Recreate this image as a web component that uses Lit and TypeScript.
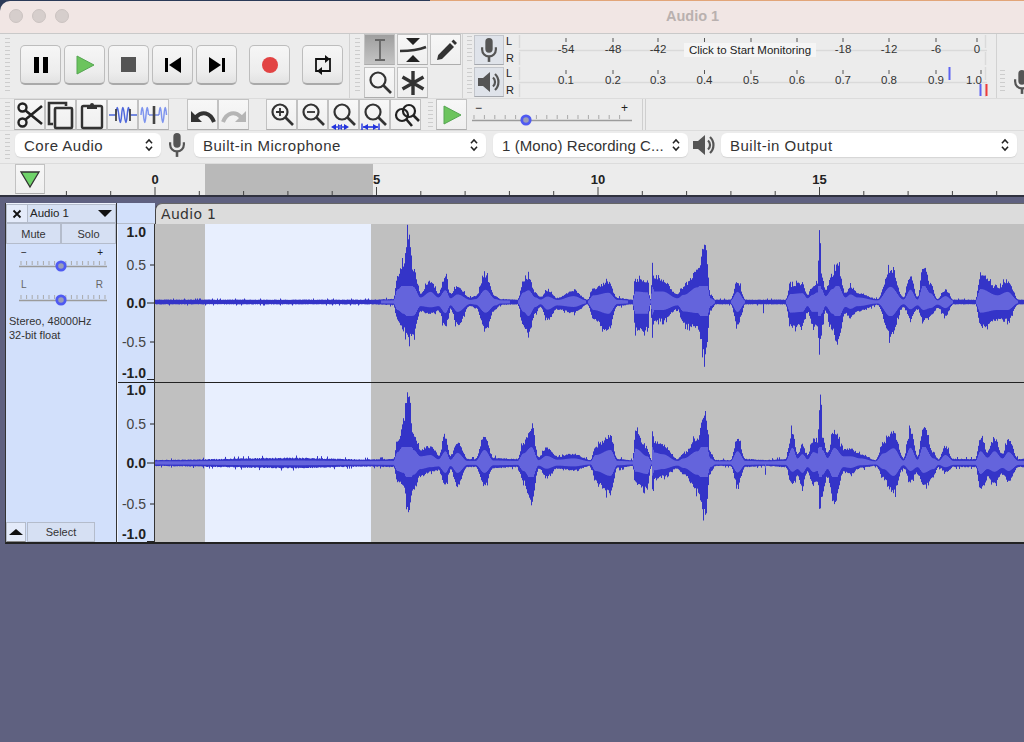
import { LitElement, css, html, svg } from "lit";
import { customElement } from "lit/decorators.js";

// [x, peak up, peak down] in screen px, read off the reference
const CH1: number[][] = [[155,2.3,2.3],[205,2.3,2.3],[370,2.3,2.3],[393,3,3],[397,29,20],[403,40,30],[408,72,40],[413,35,35],[420,10,10],[430,23,13],[438,10,10],[445,27,28],[450,8,8],[457,17,25],[470,4,4],[475,6,6],[485,28,27],[495,6,8],[500,3,3],[517,2.3,2.3],[523,22,25],[528,27,36],[535,10,12],[540,5,5],[547,12,19],[557,4,8],[573,13,12],[587,2.3,2.3],[593,15,20],[608,21,30],[617,4,4],[632,2.3,2.3],[635,24,30],[647,22,30],[650,3,3],[652,35,32],[654,24,20],[662,24,20],[677,8,8],[683,16,24],[697,34,28],[705,64,59],[710,8,10],[715,2.3,2.3],[730,2.3,2.3],[737,23,25],[745,2.3,2.3],[762,2.3,2.3],[763,2.3,13],[764,2.3,2.3],[785,2.3,2.3],[790,18,27],[802,20,25],[807,8,10],[812,16,25],[817,22,25],[819,75,55],[821,30,30],[825,13,10],[832,30,30],[837,40,44],[845,10,12],[850,17,17],[857,10,10],[877,3,3],[890,35,37],[903,5,5],[910,28,18],[917,5,8],[923,40,20],[930,20,15],[937,3,6],[945,13,15],[953,2.3,2.3],[975,2.3,2.3],[980,30,27],[997,15,20],[1007,23,20],[1018,2.3,2.3],[1024,2.3,2.3]];
const CH2: number[][] = [[155,3,3],[290,5,5],[370,3.5,3.5],[393,4,4],[397,25,20],[403,40,25],[408,79,50],[413,30,30],[420,15,15],[430,18,10],[438,8,8],[445,27,25],[450,7,7],[457,23,25],[467,4,4],[475,4,4],[484,30,25],[493,5,5],[517,4,4],[523,22,20],[531,37,43],[538,6,6],[546,16,14],[557,7,6],[573,10,8],[590,3,3],[595,18,20],[610,30,33],[617,4,5],[632,3,3],[635,33,22],[647,15,28],[651,3,3],[652,37,32],[654,24,18],[662,20,15],[677,4,6],[683,10,12],[697,27,30],[705,55,55],[710,10,10],[715,3,3],[730,3,3],[737,27,24],[745,4,4],[764,3,3],[765,3,13],[766,3,3],[785,4,4],[792,35,22],[797,10,15],[802,20,25],[807,8,10],[813,25,23],[817,22,20],[820,74,48],[822,30,30],[827,11,15],[834,35,44],[843,15,10],[850,15,12],[860,10,5],[875,3,3],[883,22,15],[893,34,33],[903,5,5],[910,35,20],[917,7,10],[923,40,25],[933,10,15],[938,4,4],[945,18,10],[953,4,4],[975,4,4],[980,27,28],[987,12,15],[994,27,22],[1002,10,12],[1008,25,20],[1018,4,4],[1024,4,4]];

const interp = (pts: number[][], x: number, i: number) => {
  for (let k = 1; k < pts.length; k++) {
    if (x <= pts[k][0]) {
      const a = pts[k - 1], b = pts[k];
      const t = (x - a[0]) / (b[0] - a[0]);
      const c = (1 - Math.cos(Math.PI * t)) / 2;
      return a[i] + (b[i] - a[i]) * c;
    }
  }
  return 2;
};

function wavePaths(pts: number[][], cy: number, seed: number) {
  let s = seed, peak = "", rms = "";
  const rnd = () => ((s = (s * 16807) % 2147483647) & 0xffff) / 0xffff;
  const jit = (a: number) => {
    const r = rnd();
    if (a > 6) return r > 0.88 ? 1.12 : 0.82 + 0.2 * r;
    return r > 0.93 ? 1.5 : 0.9 + 0.2 * r;
  };
  for (let x = 155; x < 1024; x++) {
    const u = interp(pts, x, 1), d = interp(pts, x, 2);
    const px = x - 155 + 0.5;
    peak += `M${px} ${(cy - u * jit(u)).toFixed(1)}V${(cy + d * jit(d)).toFixed(1)}`;
    if (u > 2.6) {
      const ru = Math.min(u * 0.42 + 0.4, 16);
      const rd = Math.min(d * 0.38 + 0.4, 14);
      rms += `M${px} ${(cy - ru).toFixed(1)}V${(cy + rd).toFixed(1)}`;
    }
  }
  return { peak, rms };
}

const mic = (c = "#555") => html`<svg viewBox="0 0 24 30" width="22" height="28" aria-hidden="true">
  <rect x="8" y="2" width="8" height="16" rx="4" fill=${c}></rect>
  <path d="M4.5 12v2.5a7.5 7.5 0 0 0 15 0V12" fill="none" stroke=${c} stroke-width="2.4"></path>
  <path d="M12 22v6" stroke=${c} stroke-width="2.8"></path>
</svg>`;
const speaker = (c = "#555") => html`<svg viewBox="0 0 24 24" width="24" height="24" aria-hidden="true">
  <path d="M1 8h5l7-6v20l-7-6H1z" fill=${c}></path>
  <path d="M16 7.5a6 6 0 0 1 0 9M18 4a11 11 0 0 1 0 16" fill="none" stroke=${c} stroke-width="2.2"></path>
</svg>`;
const chevrons = html`<svg class="chev" viewBox="0 0 10 16" width="10" height="14" aria-hidden="true">
  <path d="M1.5 6L5 2.2 8.5 6M1.5 10L5 13.8 8.5 10" fill="none" stroke="#222" stroke-width="1.7"></path>
</svg>`;

const play = html`<svg viewBox="0 0 24 24" width="24" height="24" aria-hidden="true"><path d="M4 3l17 9-17 9z" fill="#6cc45d" stroke="#55a552"></path></svg>`;
const glass = (inner = svg``) => html`<svg viewBox="0 0 30 30" width="30" height="30" aria-hidden="true">
  <circle cx="13" cy="12" r="7.5" fill="none" stroke="#333" stroke-width="2.2"></circle>
  <path d="M18.5 17.5L26 25" stroke="#333" stroke-width="2.6"></path>${inner}</svg>`;
const waveLine = "M8 15c.8-10 1.600-10 2.800 0s2 10 2.800 0 1.600-10 2.800 0 2 10 2.800 0 1.600-10 2.800 0";

const TRANSPORT = [
  html`<svg viewBox="0 0 24 24" width="24" height="24"><path d="M5 4h5v16H5zM14 4h5v16h-5z" fill="#000"></path></svg>`,
  play,
  html`<svg viewBox="0 0 24 24" width="24" height="24"><rect x="4" y="4" width="15" height="15" fill="#555"></rect></svg>`,
  html`<svg viewBox="0 0 24 24" width="24" height="24"><path d="M4 5h3v14H4zM20 4v16L8 12z" fill="#000"></path></svg>`,
  html`<svg viewBox="0 0 24 24" width="24" height="24"><path d="M17 5h3v14h-3zM4 4v16l12-8z" fill="#000"></path></svg>`,
];

const TOOLS = [
  html`<svg viewBox="0 0 30 30" width="30" height="30"><path d="M10 5h10M10 25h10M15 5v20" fill="none" stroke="#666" stroke-width="1.800"></path></svg>`,
  html`<svg viewBox="0 0 30 30" width="30" height="30"><path d="M8 3h14l-7 7zM8 27h14l-7-7z" fill="#222"></path><path d="M2 16c8 0 16 0 26-4" fill="none" stroke="#333" stroke-width="2.600"></path></svg>`,
  html`<svg viewBox="0 0 30 30" width="30" height="30"><path d="M6 25l1.200-5L19 8l4 4L11 24z" fill="#333"></path><path d="M20.500 6.500l2-2 3.500 3.500-2 2z" fill="#333"></path></svg>`,
  html`<svg viewBox="0 0 30 30" width="30" height="30"><circle cx="13" cy="12" r="7.500" fill="none" stroke="#333" stroke-width="2.200"></circle><path d="M18.500 17.500L26 25" stroke="#333" stroke-width="2.600"></path></svg>`,
  html`<svg viewBox="0 0 30 30" width="30" height="30"><path d="M15 3v24M4.500 9l21 12M25.500 9l-21 12" stroke="#333" stroke-width="3.400"></path></svg>`,
];

const EDIT = [
  html`<svg viewBox="0 0 30 30" width="30" height="30"><circle cx="7.500" cy="7.500" r="4" fill="none" stroke="#222" stroke-width="2.400"></circle><circle cx="7.500" cy="22.500" r="4" fill="none" stroke="#222" stroke-width="2.400"></circle><path d="M10.500 10.500L27 24M10.500 19.500L27 6" stroke="#222" stroke-width="2.600"></path></svg>`,
  html`<svg viewBox="0 0 30 30" width="30" height="30"><path d="M7 24H3V3h17v3" fill="none" stroke="#333" stroke-width="2.600"></path><rect x="9" y="8" width="17" height="20" rx="1" fill="none" stroke="#333" stroke-width="2.600"></rect></svg>`,
  html`<svg viewBox="0 0 30 30" width="30" height="30"><rect x="5" y="6" width="20" height="22" rx="1.500" fill="none" stroke="#333" stroke-width="2.400"></rect><path d="M10 9V5h3a2 2 0 0 1 4 0h3v4z" fill="#333"></path></svg>`,
  html`<svg viewBox="0 0 30 30" width="30" height="30"><path d="M1 15h7M22 15h7" stroke="#4a66d8" stroke-width="1.600"></path><path d=${waveLine} fill="none" stroke="#4f68dc" stroke-width="1.500"></path><path d="M8 9v12M22 9v12" stroke="#444" stroke-width="1.800"></path></svg>`,
  html`<svg viewBox="0 0 30 30" width="30" height="30"><path d="M2 15c.8-10 1.600-10 2.500 0s1.700 10 2.500 0 1.700-10 2.500 0M20 15c.8-10 1.600-10 2.500 0s1.700 10 2.500 0 1.700-10 2.500 0" fill="none" stroke="#7f95ee" stroke-width="1.500"></path><path d="M10 15h10" stroke="#5a72e0" stroke-width="1.200"></path><path d="M15 6v18" stroke="#444" stroke-width="2.600"></path></svg>`,
];
const UNDO = (c: string, flip: boolean) => html`<svg viewBox="0 0 30 30" width="30" height="30" class=${flip ? "flip" : ""}>
  <path d="M3 11v11h11z" fill=${c}></path>
  <path d="M8 17c6-6 14-5 18 5" fill="none" stroke=${c} stroke-width="4"></path>
</svg>`;
const ZOOMS = [
  glass(svg`<path d="M9 12h8M13 8v8" stroke="#333" stroke-width="1.800"></path>`),
  glass(svg`<path d="M9 12h8" stroke="#333" stroke-width="1.800"></path>`),
  glass(svg`<path d="M4 27h14" stroke="#2233dd" stroke-width="1.400"></path><path d="M2 27l5-3v6zM20 27l-5-3v6zM9 24l4 3-4 3zM13 24l-4 3 4 3z" fill="#2233dd"></path>`),
  glass(svg`<path d="M3 27h15" stroke="#2233dd" stroke-width="1.600"></path><path d="M2 23.500v7M19 23.500v7" stroke="#2233dd" stroke-width="1.400"></path><path d="M3 27l5-3v6zM18 27l-5-3v6z" fill="#2233dd"></path>`),
  html`<svg viewBox="0 0 30 30" width="30" height="30"><circle cx="11" cy="15" r="6" fill="none" stroke="#222" stroke-width="2.200"></circle><circle cx="18" cy="11" r="6" fill="none" stroke="#222" stroke-width="2.200"></circle><path d="M15.500 19.500L21 26M22.500 15.500L28 21" stroke="#222" stroke-width="2.600"></path></svg>`,
];

const slider = (w: number, knob: number) => {
  const ticks = [];
  for (let x = 2; x <= w - 2; x += (w - 4) / 15) ticks.push(svg`<path d="M${x} 3v4" stroke="#a9a9a9"></path>`);
  return html`<svg width=${w} height="14" viewBox="0 0 ${w} 14" aria-hidden="true">
    ${ticks}
    <path d="M0 8.500H${w}" stroke="#9b9b9b" stroke-width="1.400"></path>
    <circle cx=${knob} cy="8" r="4.200" fill="#9a9db8" stroke="#4f5af2" stroke-width="2.800"></circle>
  </svg>`;
};

@customElement("app-root")
export class AppRoot extends LitElement {
  static styles = css`
    :host {
      display: block;
      width: 1024px;
      height: 742px;
      overflow: hidden;
      background: #5f6180;
      font-family: "Liberation Sans", Arial, sans-serif;
      color: #222;
    }
    svg { display: block; flex: none; }
    .strip { background: linear-gradient(90deg, #2b3a58 0 430px, #e2a578 430px); padding-top: 1px; }
    .titlebar {
      height: 30px;
      padding-bottom: 2px;
      display: flex;
      align-items: center;
      gap: 9px;
      padding-left: 9px;
      background: #f1e6e4;
      border-top-left-radius: 10px;
    }
    .light { width: 14px; height: 14px; border-radius: 50%; background: #d6cecc; border: 1px solid #cbc3c1; box-sizing: border-box; }
    .title { margin-left: 588px; font-size: 14.500px; font-weight: 700; color: #b9b1af; }
    .chrome { background: #ececec; }
    .row { display: flex; border-top: 1px solid #c9c9c9; }
    .row1 { height: 64px; }
    .row2 { height: 31px; border-top-color: #dcdcdc; }
    .row3 { height: 28px; padding-bottom: 4px; align-items: center; border-top-color: #dcdcdc; }
    .grip {
      width: 5px;
      flex: none;
      align-self: stretch;
      margin: 4px 0;
      background: repeating-linear-gradient(180deg, #cdcdcd 0 1px, transparent 1px 4px);
    }
    .transport { width: 350px; flex: none; display: flex; align-items: center; padding: 0 0 2px 5px; box-sizing: border-box; border-right: 1px solid #d2d2d2; }
    .tbtn {
      width: 41px;
      height: 40px;
      margin-left: 3px;
      box-sizing: border-box;
      display: flex;
      align-items: center;
      justify-content: center;
      background: linear-gradient(180deg, #f6f6f6, #ededed 70%, #e2e2e2);
      border: 1px solid #bdbdbd;
      border-bottom: 2px solid #a9a9a9;
      border-radius: 5px;
    }
    .tbtn.first { margin-left: 10px; }
    .tbtn.far { margin-left: 12px; }
    .tools { display: flex; width: 113px; flex: none; padding-left: 5px; box-sizing: border-box; border-right: 1px solid #d2d2d2; }
    .toolgrid { display: grid; grid-template-columns: repeat(3, 31px); grid-auto-rows: 31px; gap: 2px; margin: 0 0 0 4px; }
    .ib {
      width: 31px;
      height: 31px;
      box-sizing: border-box;
      display: flex;
      align-items: center;
      justify-content: center;
      background: linear-gradient(180deg, #f7f7f7, #efefef);
      border: 1px solid #c2c2c2;
      border-bottom-color: #adadad;
      flex: none;
    }
    .ib.on { background: linear-gradient(180deg, #9f9f9f, #c4c4c4); }
    .flip { transform: scaleX(-1); }
    .meters { flex: 1; display: flex; flex-direction: column; }
    .mrow { height: 32px; display: flex; padding-left: 4px; }
    .mrow .grip { margin: 2px 0; }
    .mbtn {
      width: 30px;
      height: 30px;
      margin: 1px 0 0 2px;
      box-sizing: border-box;
      display: flex;
      align-items: center;
      justify-content: center;
      background: #dfe3ea;
      border: 1px solid #c3c6cc;
      border-bottom-color: #a5a8ae;
      flex: none;
    }
    .lr { width: 10px; margin: -1px 0 0 2px; font-size: 11px; line-height: 16.500px; flex: none; }
    .rest { flex: 1; display: flex; align-items: center; border-left: 1px solid #d2d2d2; padding-left: 3px; gap: 6px; overflow: hidden; }
    .rest .grip { margin: 4px 0; align-self: stretch; }
    .edit { display: flex; padding-left: 5px; flex: 1; }
    .edit .grip { margin: 3px 0; }
    .group { display: flex; }
    .group.g1 { margin-left: 4px; }
    .group.g2 { margin-left: 18px; }
    .group.g3 { margin-left: 17px; }
    .playbox { margin-left: 3px; }
    .edit .grip.g4 { margin-left: 7px; }
    .gain { width: 160px; margin-left: 5px; padding-top: 3px; box-sizing: border-box; flex: none; }
    .pm { display: flex; justify-content: space-between; padding: 0 4px 0 3px; font-size: 12px; line-height: 13px; height: 10px; }
    .dbl { margin-left: 10px; width: 2px; border-left: 1px solid #cfcfcf; border-right: 1px solid #cfcfcf; align-self: stretch; }
    .devices { display: flex; align-items: center; padding-left: 5px; flex: 1; }
    .devices .grip { align-self: stretch; margin: 3px 0 0; }
    .sel {
      height: 24px;
      box-sizing: border-box;
      display: flex;
      align-items: center;
      justify-content: space-between;
      padding: 0 7px 0 9px;
      background: #fff;
      border-radius: 6px;
      font-size: 15px;
      letter-spacing: 0.5px;
      white-space: nowrap;
      color: #333;
      flex: none;
      box-shadow: 0 1px 1px #d5d5d5;
    }
    .sel.tight { letter-spacing: 0.07px; }
    .iconcell { width: 32px; flex: none; display: flex; justify-content: center; }
    .ruler { display: flex; height: 31px; background: #ececec; border-top: 1px solid #dcdcdc; padding-left: 15px; }
    .ruler .ib { width: 30px; height: 30px; }
    .band { height: 2px; background: #30323f; }
    .track { display: flex; margin: 6px 0 0 5px; height: 341px; }
    .panel {
      width: 112px;
      flex: none;
      box-sizing: border-box;
      display: flex;
      flex-direction: column;
      background: #d2e0fb;
      border-left: 1px solid #333;
      border-right: 1px solid #333;
      border-bottom: 2px solid #222;
    }
    .phead { display: flex; height: 19px; border-top: 1px solid #eef3fd; }
    .close { width: 22px; display: flex; align-items: center; justify-content: center; background: #e4ebfa; border: 1px solid #b4bccb; box-sizing: border-box; flex: none; }
    .name { flex: 1; display: flex; align-items: center; justify-content: space-between; padding: 0 3px 1px 2px; font-size: 11.500px; background: #d6e0f3; border: 1px solid #b4bccb; border-left: 0; box-sizing: border-box; }
    .arrow-d { width: 0; height: 0; border-left: 7px solid transparent; border-right: 7px solid transparent; border-top: 7px solid #111; }
    .ms { display: flex; height: 21px; }
    .pbtn { display: flex; align-items: center; justify-content: center; font-size: 11px; color: #333; background: #d6e0f3; border: 1px solid #b4bccb; box-sizing: border-box; }
    .ms .pbtn { flex: 1; }
    .slideblock { padding: 3px 9px 0 13px; height: 30px; }
    .slideblock.pan { margin-top: -1px; color: #666; }
    .slideblock.pan svg { margin-top: 2px; }
    .ends { display: flex; justify-content: space-between; padding: 0 4px 0 2px; font-size: 10px; line-height: 12px; height: 11px; }
    .info { padding: 5px 0 0 3px; font-size: 11px; line-height: 14px; color: #333; }
    .pfoot { margin-top: auto; display: flex; height: 20px; }
    .pfoot .tri { width: 20px; background: #e4ebfa; }
    .pfoot .pbtn.tri { border-bottom-color: #888; }
    .arrow-u { width: 0; height: 0; border-left: 7px solid transparent; border-right: 7px solid transparent; border-bottom: 6px solid #111; }
    .pfoot .select { width: 68px; margin-left: 1px; }
    .vscale { width: 38px; flex: none; background: #d2e0fb; }
    .lane { flex: 1; min-width: 0; display: flex; flex-direction: column; background: #c0c0c0; border-bottom: 2px solid #222; }
    .ltitle {
      height: 21px;
      box-sizing: border-box;
      background: #dcdcdc;
      border-top: 1px solid #666;
      border-left: 1px solid #444;
      border-top-left-radius: 7px;
      font-family: "DejaVu Sans", sans-serif;
      font-size: 14px;
      letter-spacing: 0.3px;
      padding: 2px 0 0 5px;
      color: #333;
    }
    .wrap { background: #5f6180; }
    .sep { height: 1px; background: #222; }
  `;

  private wave1 = wavePaths(CH1, 78, 1234);
  private wave2 = wavePaths(CH2, 80, 5678);

  private meter(labels: string[], second: boolean) {
    const xs = [565, 612, 657, 703.5, 750, 796, 842, 888, 935, 976];
    return html`<svg width="480" height="32" viewBox="515 0 480 32">
      <path d="M518.500 1V14M518.500 18V31M518 16.500H986M984.500 1V14M984.500 18V31" fill="none" stroke="#dadada" stroke-width="1.500"></path>
      ${xs.map((x, i) => svg`<path d="M${second && i === 9 ? 980 : x} 4v4" stroke="#555"></path>`)}
      ${labels.map((t, i) =>
        t
          ? svg`<text x=${second && i === 9 ? 973 : xs[i]} y=${second ? 18 : 18.5} text-anchor="middle" font-family="Liberation Sans" font-size="11.500" fill="#333">${t}</text>`
          : ""
      )}
      ${second
        ? svg`<path d="M948.500 1v13M979.500 18v12" stroke="#5c63f2" stroke-width="2"></path><path d="M985.500 18v12" stroke="#ee3b3b" stroke-width="2"></path>`
        : svg`<rect x="683" y="9" width="132" height="14" fill="#f5f5f5"></rect>
              <text x="749" y="20" text-anchor="middle" font-family="Liberation Sans" font-size="11.500" fill="#222">Click to Start Monitoring</text>`}
    </svg>`;
  }

  private timeRuler() {
    const ticks = [];
    const X = (sec: number) => 155 + sec * 44.3 - 45;
    for (let s = -2; s <= 20; s++) {
      const major = s % 5 === 0;
      ticks.push(svg`<path d="M${X(s)} ${major ? 23 : 27}V31" stroke="#444"></path>`);
      if (major && s >= 0 && s < 20) {
        ticks.push(svg`<text x=${X(s)} y="20" text-anchor="middle" font-family="Liberation Sans" font-size="13" font-weight="700" fill="#222">${s}</text>`);
      }
    }
    return html`<svg width="979" height="31" viewBox="0 0 979 31">
      <rect x="160" y="0" width="168" height="31" fill="#b9b9b9"></rect>
      ${ticks}
    </svg>`;
  }

  private vScale() {
    const lab = (y: number, t: string, bold: boolean, tick: number) => svg`
      <text x="29" y=${y + 5} text-anchor="end" font-family="Liberation Sans" font-size="14" font-weight=${bold ? 700 : 400} fill=${bold ? "#222" : "#444"}>${t}</text>
      <path d="M${37 - tick} ${y}H37" stroke="#222"></path>`;
    const side = (a: number, b: number, c: number, d: number, e: number) => svg`
      ${lab(a, "1.0", true, 0)}${lab(b, "0.5", false, 4)}${lab(c, "0.0", true, 7)}${lab(d, "-0.5", false, 4)}${lab(e, "-1.0", true, 0)}`;
    return html`<svg class="vscale" width="38" height="341" viewBox="0 0 38 341">
      <path d="M0 20.500H38" stroke="#b4bccb"></path>
      ${side(29, 62, 100, 139, 170)}
      <path d="M0 179.500H38" stroke="#222"></path>
      <path d="M30 176.500H38" stroke="#222"></path>
      ${side(187, 221, 260, 301, 331)}
      <path d="M0.500 21V339" stroke="#eef3fd"></path>
      <path d="M37.500 21V341" stroke="#333"></path>
      <path d="M0 340H38" stroke="#222" stroke-width="2"></path>
      <path d="M30 338.500H37" stroke="#222"></path>
    </svg>`;
  }

  private channel(h: number, w: { peak: string; rms: string }) {
    return html`<svg width="869" height=${h} viewBox="0 0 869 ${h}">
      <rect x="50" y="0" width="166" height=${h} fill="#e8effe"></rect>
      <path d=${w.peak} stroke="#3434c8" stroke-width="1" fill="none"></path>
      <path d=${w.rms} stroke="#6464dc" stroke-width="1" fill="none"></path>
    </svg>`;
  }

  render() {
    return html`
      <div class="strip">
        <div class="titlebar">
          <span class="light"></span><span class="light"></span><span class="light"></span>
          <span class="title">Audio 1</span>
        </div>
      </div>
      <div class="chrome">
        <div class="row row1">
          <div class="transport">
            <span class="grip"></span>
            ${TRANSPORT.map((ic, i) => html`<div class="tbtn ${i === 0 ? "first" : ""}">${ic}</div>`)}
            <div class="tbtn far">
              <svg viewBox="0 0 24 24" width="24" height="24"><circle cx="12" cy="12" r="8" fill="#e24343"></circle></svg>
            </div>
            <div class="tbtn far">
              <svg viewBox="0 0 24 24" width="24" height="24"><path d="M8 18H5V6h10M16 18h3V6h-1M8 18h8" fill="none" stroke="#111" stroke-width="1.800"></path><path d="M14 2l5 4-5 4zM11 14l-5 4 5 4z" fill="#111"></path></svg>
            </div>
          </div>
          <div class="tools">
            <span class="grip"></span>
            <div class="toolgrid">
              ${TOOLS.map((ic, i) => html`<div class="ib ${i === 0 ? "on" : ""}">${ic}</div>`)}
            </div>
          </div>
          <div class="meters">
            <div class="mrow">
              <span class="grip"></span>
              <div class="mbtn">${mic()}</div>
              <div class="lr">L<br />R</div>
              ${this.meter(["-54", "-48", "-42", "", "", "", "-18", "-12", "-6", "0"], false)}
              <div class="rest"></div>
            </div>
            <div class="mrow">
              <span class="grip"></span>
              <div class="mbtn">${speaker()}</div>
              <div class="lr">L<br />R</div>
              ${this.meter(["0.1", "0.2", "0.3", "0.4", "0.5", "0.6", "0.7", "0.8", "0.9", "1.0"], true)}
              <div class="rest"><span class="grip"></span>${mic()}</div>
            </div>
          </div>
        </div>
        <div class="row row2">
          <div class="edit">
            <span class="grip"></span>
            <div class="group g1">${EDIT.map((ic) => html`<div class="ib">${ic}</div>`)}</div>
            <div class="group g2">
              <div class="ib">${UNDO("#333", false)}</div>
              <div class="ib">${UNDO("#b5b5b5", true)}</div>
            </div>
            <div class="group g3">${ZOOMS.map((ic) => html`<div class="ib">${ic}</div>`)}</div>
            <span class="grip g4"></span>
            <div class="ib playbox">${play}</div>
            <div class="gain">
              <div class="pm"><span>−</span><span>+</span></div>
              ${slider(160, 54)}
            </div>
            <span class="dbl"></span>
          </div>
        </div>
        <div class="row row3">
          <div class="devices">
            <span class="grip"></span>
            <div class="sel" style="width:146px;margin-left:5px">Core Audio ${chevrons}</div>
            <div class="iconcell">${mic()}</div>
            <div class="sel" style="width:292px;margin-left:1px">Built-in Microphone ${chevrons}</div>
            <div class="sel tight" style="width:195px;margin-left:7px">1 (Mono) Recording C... ${chevrons}</div>
            <div class="iconcell" style="margin-right:1px">${speaker()}</div>
            <div class="sel" style="width:296px">Built-in Output ${chevrons}</div>
          </div>
        </div>
        <div class="ruler">
          <div class="ib">
            <svg viewBox="0 0 24 24" width="24" height="24"><path d="M3 5h18L12 20z" fill="#6fd36a" stroke="#333" stroke-width="1.300"></path></svg>
          </div>
          ${this.timeRuler()}
        </div>
      </div>
      <div class="band"></div>
      <div class="track">
        <div class="panel">
          <div class="phead">
            <div class="close">
              <svg viewBox="0 0 10 10" width="10" height="10"><path d="M1.500 1.500l7 7M8.500 1.500l-7 7" stroke="#111" stroke-width="1.800"></path></svg>
            </div>
            <div class="name">Audio 1 <span class="arrow-d"></span></div>
          </div>
          <div class="ms"><div class="pbtn">Mute</div><div class="pbtn">Solo</div></div>
          <div class="slideblock">
            <div class="ends"><span>−</span><span>+</span></div>
            ${slider(88, 42)}
          </div>
          <div class="slideblock pan">
            <div class="ends"><span>L</span><span>R</span></div>
            ${slider(88, 42)}
          </div>
          <div class="info">Stereo, 48000Hz<br />32-bit float</div>
          <div class="pfoot">
            <div class="pbtn tri"><span class="arrow-u"></span></div>
            <div class="pbtn select">Select</div>
          </div>
        </div>
        ${this.vScale()}
        <div class="lane">
          <div class="wrap"><div class="ltitle">Audio 1</div></div>
          ${this.channel(158, this.wave1)}
          <div class="sep"></div>
          ${this.channel(159, this.wave2)}
        </div>
      </div>
    `;
  }
}
